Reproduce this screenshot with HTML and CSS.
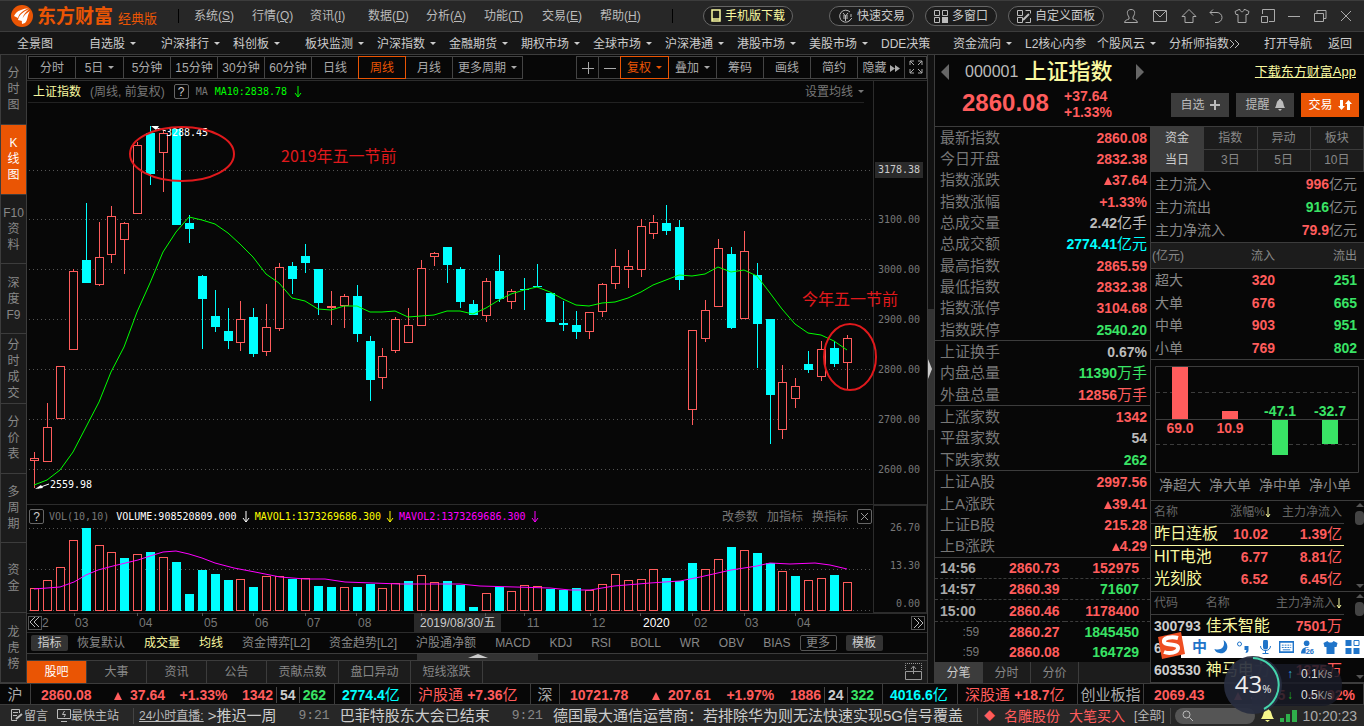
FILE: index.html
```html
<!DOCTYPE html>
<html lang="zh-CN">
<head>
  <meta charset="UTF-8">
  <meta name="viewport" content="width=device-width, initial-scale=1.0">
  <title>东方财富 经典版</title>
  <link rel="stylesheet" href="styles.css">
</head>
<body>

  <!-- Title bar -->
  <header class="titlebar">
    <div class="brand">
      <svg class="brand-mark" viewBox="0 0 22 22"><circle cx="11" cy="11" r="11" fill="#ea5504"/><path d="M3 11C6 5 12 4 18 3c-5 2-10 5-11 10zM7 15c1-5 5-8 11-11-4 4-6 6-7 12zM11 19c-1-6 3-10 8-13-3 4-2 9-5 12z" fill="#fff"/></svg>
      <span class="brand-name">东方财富</span>
      <span class="brand-edition">经典版</span>
    </div>
    <nav class="menu">
      <a href="#">系统(<u>S</u>)</a>
      <a href="#">行情(<u>Q</u>)</a>
      <a href="#">资讯(<u>I</u>)</a>
      <a href="#">数据(<u>D</u>)</a>
      <a href="#">分析(<u>A</u>)</a>
      <a href="#">功能(<u>T</u>)</a>
      <a href="#">交易(<u>E</u>)</a>
      <a href="#">帮助(<u>H</u>)</a>
    </nav>
    <button class="pill pill-phone"><svg width="10" height="14" viewBox="0 0 10 14"><path d="M1 1h8v11H1zM1 10h8M4 12h2" fill="none" stroke="#f9f9a0" stroke-width="1.5"/></svg>手机版下载</button>
    <div class="pills">
      <button class="pill"><svg width="15" height="15" viewBox="0 0 15 15" fill="none" stroke="#bbb"><path d="M12 3a6 6 0 1 0 1 7M5 4l2.500 3L10 4M7.500 7v5M5 7h5M5 9h5M13 5v3M11 12l3-3"/></svg>快速交易</button>
      <button class="pill"><svg width="14" height="13" viewBox="0 0 14 13" fill="none" stroke="#bbb"><path d="M.5.5h5v5h-5zM8.500.5h5v5h-5zM.5 7.500h5v5h-5z"/><path d="M8 7h6v6H8z" fill="#bbb" stroke="none"/></svg>多窗口</button>
      <button class="pill"><svg width="14" height="13" viewBox="0 0 14 13" fill="none" stroke="#bbb"><path d="M.5.5h5v5h-5zM8.500.5h5v3M.5 7.500h5v5h-5zM13.500 8v4.500h-5"/><path d="M6 10l6-6" stroke-width="2"/></svg>自定义面板</button>
    </div>
    <div class="window-tools">
      <button class="wide" aria-label="用户"><svg viewBox="0 0 16 16"><path d="M8 1.500c5 0 4 5 2 7.500v2c2 1 4 1 4.500 3.500h-13C2 12 4 12 6 11V9C4 6.500 3 1.500 8 1.500z"/></svg></button>
      <button class="wide" aria-label="邮件"><svg viewBox="0 0 16 16"><path d="M1.500 2.500h13v11h-13zM2 3l6 6 6-6"/></svg></button>
      <button class="wide" aria-label="主页"><svg viewBox="0 0 16 16"><path d="M1 8.500l7-7 7 7h-3v6H4v-6z"/></svg></button>
      <button aria-label="后退"><svg viewBox="0 0 16 16"><path d="M5 1.500l-3 3 3 3M2 4.500h7a5 5 0 0 1 0 10H7"/></svg></button>
      <button aria-label="皮肤"><svg viewBox="0 0 16 16"><path d="M5 1.500h1c0 3 4 3 4 0h1l4 2-1 3h-2v8H4v-8H2l-1-3z"/></svg></button>
      <button aria-label="布局"><svg viewBox="0 0 16 16"><path d="M2.500 6V1.500h12v12H9M1.500 8.500h6v6h-6z"/></svg></button>
      <button aria-label="最小化"><svg viewBox="0 0 16 16"><path d="M2 8.500h12"/></svg></button>
      <button aria-label="还原"><svg viewBox="0 0 16 16"><path d="M2.500 5.500h9v8h-9zM5 5V2.500h9v8h-2"/></svg></button>
      <button aria-label="关闭"><svg viewBox="0 0 16 16"><path d="M3 3l10 10M13 3L3 13"/></svg></button>
    </div>
  </header>

  <!-- Market navigation -->
  <nav class="markets">
    <a href="#">全景图</a>
    <a href="#">自选股<i class="caret"></i></a>
    <a href="#">沪深排行<i class="caret"></i></a>
    <a href="#">科创板<i class="caret"></i></a>
    <a href="#">板块监测<i class="caret"></i></a>
    <a href="#">沪深指数<i class="caret"></i></a>
    <a href="#">金融期货<i class="caret"></i></a>
    <a href="#">期权市场<i class="caret"></i></a>
    <a href="#">全球市场<i class="caret"></i></a>
    <a href="#">沪深港通<i class="caret"></i></a>
    <a href="#">港股市场<i class="caret"></i></a>
    <a href="#">美股市场<i class="caret"></i></a>
    <a href="#">DDE决策</a>
    <a href="#">资金流向<i class="caret"></i></a>
    <a href="#">L2核心内参</a>
    <a href="#">个股风云<i class="caret"></i></a>
    <a href="#">分析师指数<svg width="11" height="8" viewBox="0 0 11 8"><path d="M1 0l4 4-4 4M6 0l4 4-4 4" fill="none" stroke="#bbb"/></svg></a>
    <a href="#" class="nav-end">打开导航</a>
    <a href="#" class="nav-back">返回</a>
  </nav>

  <main class="workspace">
    <!-- Left tabs -->
    <aside class="side-tabs">
      <button>分<br>时<br>图</button>
      <button class="active">K<br>线<br>图</button>
      <button>F10<br>资<br>料</button>
      <button>深<br>度<br>F9</button>
      <button>分<br>时<br>成<br>交</button>
      <button>分<br>价<br>表</button>
      <button>多<br>周<br>期</button>
      <button>资<br>金</button>
      <button>龙<br>虎<br>榜</button>
    </aside>

    <section class="chart">
      <div class="toolbar">
        <div class="tool-group">
          <button>分时</button>
          <button class="drop">5日<i class="caret"></i></button>
          <button>5分钟</button>
          <button>15分钟</button>
          <button>30分钟</button>
          <button>60分钟</button>
          <button>日线</button>
          <button class="active">周线</button>
          <button>月线</button>
          <button class="long">更多周期<i class="caret"></i></button>
        </div>
        <div class="tool-group">
          <button class="short" aria-label="放大"><svg width="12" height="12" viewBox="0 0 12 12"><path d="M0 6.500h12M6.500 0v12" stroke="#aaa"/></svg></button>
          <button class="short" aria-label="缩小"><svg width="12" height="12" viewBox="0 0 12 12"><path d="M0 6.500h12" stroke="#aaa"/></svg></button>
          <button class="drop active">复权<i class="caret"></i></button>
          <button class="drop">叠加<i class="caret"></i></button>
          <button>筹码</button>
          <button>画线</button>
          <button>简约</button>
          <button>隐藏<svg class="fast" width="10" height="7" viewBox="0 0 10 7"><path d="M0 0l5 3.500L0 7zM5 0l5 3.500L5 7z" fill="#aaa"/></svg></button>
          <button class="short" aria-label="全屏"><svg width="14" height="14" viewBox="0 0 14 14"><path d="M1 5V1h4M1 1l4 4M9 1h4v4M13 1L9 5M1 9v4h4M1 13l4-4M13 9v4H9M13 13L9 9" fill="none" stroke="#aaa"/></svg></button>
        </div>
      </div>

      <!-- Price chart -->
      <div class="pane pane-price">
        <div class="pane-main">
          <div class="legend">
            <span class="name">上证指数</span>
            <span class="period">(周线, 前复权)</span>
            <button class="help">?</button>
            <span class="mono">MA</span>
            <span class="mono green">MA10:2838.78</span>
            <svg class="down green" width="8" height="12" viewBox="0 0 8 12"><path d="M4 0v11M1 7l3 4 3-4"/></svg>
            <button class="link legend-end">设置均线<i class="caret"></i></button>
          </div>
          <svg class="plot" id="pricePlot"></svg>
        </div>
        <div class="axis axis-price">
          <span><b class="axis-tag">3178.38</b></span>
          <span>3100.00</span>
          <span>3000.00</span>
          <span>2900.00</span>
          <span>2800.00</span>
          <span>2700.00</span>
          <span>2600.00</span>
        </div>
      </div>

      <!-- Volume chart -->
      <div class="pane pane-volume">
        <div class="pane-main">
          <div class="legend">
            <button class="help">?</button>
            <span class="mono">VOL(10,10)</span>
            <span class="mono white">VOLUME:908520809.000</span>
            <svg class="down white" width="8" height="12" viewBox="0 0 8 12"><path d="M4 0v11M1 7l3 4 3-4"/></svg>
            <span class="mono yellow">MAVOL1:1373269686.300</span>
            <svg class="down yellow" width="8" height="12" viewBox="0 0 8 12"><path d="M4 0v11M1 7l3 4 3-4"/></svg>
            <span class="mono magenta">MAVOL2:1373269686.300</span>
            <svg class="down magenta" width="8" height="12" viewBox="0 0 8 12"><path d="M4 0v11M1 7l3 4 3-4"/></svg>
            <button class="link legend-end">改参数</button>
            <button class="link">加指标</button>
            <button class="link">换指标</button>
            <button class="help" aria-label="关闭"><svg width="9" height="9" viewBox="0 0 9 9"><path d="M1 1l7 7M8 1L1 8" stroke="#999"/></svg></button>
          </div>
          <svg class="plot" id="volumePlot"></svg>
        </div>
        <div class="axis axis-volume">
          <span>26.70</span>
          <span>13.30</span>
          <span>0.00</span>
        </div>
      </div>

      <div class="dates">
        <span><button class="page-btn" aria-label="向前"><svg width="10" height="10" viewBox="0 0 10 10"><path d="M5 0L0 5l5 5M9 0L4 5l5 5" fill="none" stroke="#bbb"/></svg></button>2</span>
        <span>03</span>
        <span>04</span>
        <span>05</span>
        <span>06</span>
        <span>07</span>
        <span>08</span>
        <span><b class="date-tag">2019/08/30/五</b></span>
        <span>11</span>
        <span>12</span>
        <span class="year">2020</span>
        <span>02</span>
        <span>03</span>
        <span>04</span>
        <button class="page-btn" aria-label="向后"><svg width="10" height="10" viewBox="0 0 10 10"><path d="M1 0l5 5-5 5M5 0l5 5-5 5" fill="none" stroke="#bbb"/></svg></button>
      </div>

      <div class="indicators">
        <button class="solid">指标</button>
        <button>恢复默认</button>
        <button class="on">成交量</button>
        <button class="on">均线</button>
        <button>资金博弈[L2]</button>
        <button>资金趋势[L2]</button>
        <button>沪股通净额</button>
        <button>MACD</button>
        <button>KDJ</button>
        <button>RSI</button>
        <button>BOLL</button>
        <button>WR</button>
        <button>OBV</button>
        <button>BIAS</button>
        <button class="outline">更多</button>
        <button class="solid">模板</button>
      </div>
      <div class="h-scroll"><div class="h-thumb"><i></i></div></div>
      <div class="info-tabs">
        <button class="active">股吧</button>
        <button>大事</button>
        <button>资讯</button>
        <button>公告</button>
        <button class="long">贡献点数</button>
        <button class="long">盘口异动</button>
        <button class="long">短线涨跌</button>
        <button class="expand" aria-label="展开"><svg width="17" height="17" viewBox="0 0 17 17" fill="none" stroke="#999"><path d="M.5 8.500h16v8H.5zM8.500 11V4M6 6l2.500-3L11 6"/><path d="M.5 7V.5h16V7" stroke-dasharray="1 1"/></svg></button>
      </div>
    </section>

    <div class="splitter"><div class="split-thumb"><i></i></div></div>

    <!-- Right side -->
    <section class="detail">
      <div class="quote-head">
        <div class="quote-title">
          <button class="arrow-left" aria-label="上一个"></button>
          <span class="code">000001</span>
          <h1>上证指数</h1>
          <button class="arrow-right" aria-label="下一个"></button>
          <a href="#" class="app-link">下载东方财富App</a>
        </div>
        <div class="quote-price">
          <span class="last">2860.08</span>
          <span class="change">+37.64<br>+1.33%</span>
          <button>自选<svg width="10" height="10" viewBox="0 0 10 10"><path d="M0 5h10M5 0v10" stroke="#bbb" stroke-width="2"/></svg></button>
          <button>提醒<svg width="10" height="12" viewBox="0 0 10 12"><path d="M4 0h2v1c3 1 2 5 4 8H0c2-3 1-7 4-8zM3 10h4l-2 2z" fill="#bbb"/></svg></button>
          <button class="trade">交易<svg width="14" height="10" viewBox="0 0 14 10"><path d="M2 0h3v6h2l-3.500 4L0 6h2zM9 10h3V4h2l-3.500-4L7 4h2z" fill="#fff"/></svg></button>
        </div>
      </div>

      <div class="detail-cols">
        <div class="stats">
          <table class="quote-table">
            <tr><th>最新指数</th><td class="up">2860.08</td></tr>
            <tr><th>今日开盘</th><td class="up">2832.38</td></tr>
            <tr><th>指数涨跌</th><td class="up"><i class="tri"></i>37.64</td></tr>
            <tr><th>指数涨幅</th><td class="up">+1.33%</td></tr>
            <tr><th>总成交量</th><td>2.42<em>亿手</em></td></tr>
            <tr><th>总成交额</th><td class="cyan">2774.41<em>亿元</em></td></tr>
            <tr><th>最高指数</th><td class="up">2865.59</td></tr>
            <tr><th>最低指数</th><td class="up">2832.38</td></tr>
            <tr><th>指数涨停</th><td class="up">3104.68</td></tr>
            <tr><th>指数跌停</th><td class="dn">2540.20</td></tr>
            <tr class="rule"><th>上证换手</th><td>0.67%</td></tr>
            <tr><th>内盘总量</th><td class="dn">11390<em>万手</em></td></tr>
            <tr><th>外盘总量</th><td class="up">12856<em>万手</em></td></tr>
            <tr class="rule"><th>上涨家数</th><td class="up">1342</td></tr>
            <tr><th>平盘家数</th><td>54</td></tr>
            <tr><th>下跌家数</th><td class="dn">262</td></tr>
            <tr class="rule"><th>上证A股</th><td class="up">2997.56</td></tr>
            <tr><th>上A涨跌</th><td class="up"><i class="tri"></i>39.41</td></tr>
            <tr><th>上证B股</th><td class="up">215.28</td></tr>
            <tr><th>上B涨跌</th><td class="up"><i class="tri"></i>4.29</td></tr>
          </table>
          <table class="ticks">
            <tr><th>14:56</th><td class="up">2860.73</td><td class="up">152975</td></tr>
            <tr class="dash"><th>14:57</th><td class="up">2860.39</td><td class="dn">71607</td></tr>
            <tr class="dash"><th>15:00</th><td class="up">2860.46</td><td class="up">1178400</td></tr>
            <tr><th class="sec">:59</th><td class="up">2860.27</td><td class="dn">1845450</td></tr>
            <tr><th class="sec">:59</th><td class="up">2860.08</td><td class="dn">164729</td></tr>
          </table>
          <div class="stat-tabs">
            <button class="active">分笔</button>
            <button>分时</button>
            <button>分价</button>
          </div>
        </div>

        <div class="funds">
          <div class="fund-tabs">
            <button class="active">资金</button>
            <button>指数</button>
            <button>异动</button>
            <button>板块</button>
            <button class="active">当日</button>
            <button>3日</button>
            <button>5日</button>
            <button>10日</button>
          </div>
          <table class="main-flow">
            <tr><th>主力流入</th><td><b class="up">996</b>亿元</td></tr>
            <tr><th>主力流出</th><td><b class="dn">916</b>亿元</td></tr>
            <tr><th>主力净流入</th><td><b class="up">79.9</b>亿元</td></tr>
          </table>
          <table class="orders">
            <thead><tr><th>(亿元)</th><th>流入</th><th>流出</th></tr></thead>
            <tbody>
              <tr><th>超大</th><td class="up">320</td><td class="dn">251</td></tr>
              <tr><th>大单</th><td class="up">676</td><td class="dn">665</td></tr>
              <tr><th>中单</th><td class="up">903</td><td class="dn">951</td></tr>
              <tr><th>小单</th><td class="up">769</td><td class="dn">802</td></tr>
            </tbody>
          </table>
          <div class="net">
            <svg width="204" height="107" viewBox="0 0 204 107">
              <path d="M.5.5h203v106H.5zM1 53.500h202" class="frame"/>
              <path d="M1 26.500h202M1 78.500h202" class="frame dashed"/>
              <path d="M17 1h16v52H17zM67 45h16v8H67z" fill="#ff5c5c"/>
              <path d="M117 54h16v35h-16zM167 54h16v24h-16z" fill="#39e365"/>
              <text x="25" y="67" class="t-up">69.0</text>
              <text x="75" y="67" class="t-up">10.9</text>
              <text x="125" y="50" class="t-dn">-47.1</text>
              <text x="175" y="50" class="t-dn">-32.7</text>
            </svg>
            <div class="net-labels"><span>净超大</span><span>净大单</span><span>净中单</span><span>净小单</span></div>
          </div>
          <div class="list">
            <table>
              <thead><tr><th>名称</th><th>涨幅%<svg class="down pale" width="6" height="11" viewBox="0 0 6 11"><path d="M3 0v10M1 7l2 3 2-3"/></svg></th><th>主力净流入</th></tr></thead>
              <tbody>
                <tr class="picked"><td>昨日连板</td><td>10.02</td><td>1.39<em>亿</em></td></tr>
                <tr><td>HIT电池</td><td>6.77</td><td>8.81<em>亿</em></td></tr>
                <tr><td>光刻胶</td><td>6.52</td><td>6.45<em>亿</em></td></tr>
              </tbody>
            </table>
            <div class="v-scroll"><i class="v-up"></i><i class="v-thumb"></i><i class="v-down"></i></div>
          </div>
          <div class="list list-stocks">
            <table>
              <thead><tr><th>代码</th><th>名称</th><th>主力净流入<svg class="down pale" width="6" height="11" viewBox="0 0 6 11"><path d="M3 0v10M1 7l2 3 2-3"/></svg></th></tr></thead>
              <tbody>
                <tr><td>300793</td><td>佳禾智能</td><td>7501<em>万</em></td></tr>
                <tr><td>6</td><td></td><td></td></tr>
                <tr><td>603530</td><td>神马电力</td><td>1375<em>万</em></td></tr>
              </tbody>
            </table>
            <div class="v-scroll"><i class="v-up"></i><i class="v-thumb"></i><i class="v-down"></i></div>
          </div>
        </div>
      </div>
    </section>
  </main>

  <!-- Index ticker -->
  <div class="ticker">
    <div class="mkt">沪</div>
    <div class="idx up"><b>2860.08</b><b><i class="tri"></i>37.64</b><b>+1.33%</b><span class="counts"><b>1342</b><b class="flat">54</b><b class="dn">262</b></span></div>
    <div class="cyan"><b>2774.4</b>亿</div>
    <div class="up">沪股通 <b>+7.36</b>亿</div>
    <div class="mkt">深</div>
    <div class="idx up"><b>10721.78</b><b><i class="tri"></i>207.61</b><b>+1.97%</b><span class="counts"><b>1886</b><b class="flat">24</b><b class="dn">322</b></span></div>
    <div class="cyan"><b>4016.6</b>亿</div>
    <div class="up">深股通 <b>+18.7</b>亿</div>
    <div class="mkt">创业板指</div>
    <div class="idx up"><b>2069.43</b><b><i class="tri"></i>38.95</b><b>+1.92%</b></div>
  </div>

  <footer class="statusbar">
    <div class="status-links">
      <a href="#"><svg width="14" height="13" viewBox="0 0 14 13" fill="none" stroke="#bbb"><path d="M7 11.500H1.500V.5h8V4M3 3.500h5M3 6.500h4"/><path d="M6 10l6-5" stroke-width="2"/></svg>留言</a>
      <a href="#"><svg width="14" height="13" viewBox="0 0 14 13" fill="none" stroke="#bbb"><path d="M.5.5h13v9H.5zM4 12.500h6M7.500 2L5.500 5.500h3L7 8"/></svg>最快主站</a>
    </div>
    <div class="news">
      <a href="#" class="live">24小时直播:</a>
      <span class="headline">&gt;推迟一周</span>
      <time>9:21</time>
      <span class="headline">巴菲特股东大会已结束</span>
      <time>9:21</time>
      <span class="headline">德国最大通信运营商：若排除华为则无法快速实现5G信号覆盖</span>
    </div>
    <div class="alert"><span class="up gem">◆</span><span class="up">名雕股份</span><span class="up">大笔买入</span><a href="#">[全部]</a></div>
    <div class="tray">
      <label class="search"><svg width="11" height="11" viewBox="0 0 11 11"><path d="M7.500 7.500L11 11M8 4.500a3.500 3.500 0 1 1-7 0 3.500 3.500 0 0 1 7 0z" fill="none" stroke="#bbb"/></svg><input type="text" aria-label="搜索"></label>
      <svg width="13" height="13" viewBox="0 0 13 13"><path d="M5 0h3v1c3 1 2 5 5 9H0c3-4 2-8 5-9zM4 11h5l-2.500 2z" fill="#f6f68c"/></svg>
      <svg width="17" height="12" viewBox="0 0 17 12"><path d="M0 8h4v4H0zM6 4h4v8H6zM12 0h5v12h-5z" fill="#2fae4b"/></svg>
      <time>10:20:23</time>
    </div>
  </footer>

  <!-- Floating input method bar -->
  <div class="ime">
    <svg class="ime-logo" viewBox="0 0 28 28"><path d="M1 5L24 0l4 22-23 5z" fill="#ee4e22"/><path d="M21 6C14 4 6 6 7 10s14 1 14 6-9 6-14 4" fill="none" stroke="#fff" stroke-width="4"/></svg>
    <span>中</span>
    <svg viewBox="0 0 14 14"><path d="M9 0c8 6 2 15-4 13-3 0-5-3-5-4 7 2 11-2 9-9z" fill="#1f74c9"/></svg>
    <svg viewBox="0 0 14 14"><circle cx="3" cy="4" r="2" fill="none" stroke="#1f74c9"/><path d="M8 6h4v4c0 2-1 3-3 3l1-3H8z" fill="#1f74c9"/></svg>
    <svg viewBox="0 0 14 14"><path d="M7 2v5" stroke="#1f74c9" stroke-width="5" stroke-linecap="round"/><path d="M2 6c0 6 10 6 10 0M7 10v4M4 13.500h6" fill="none" stroke="#1f74c9"/></svg>
    <svg viewBox="0 0 16 14"><path d="M.5 1.500h15v11H.5z" fill="none" stroke="#1f74c9" stroke-width="2"/><path d="M3 5h10M3 7.500h10" stroke="#1f74c9" stroke-dasharray="2 1"/><path d="M4 10h8" stroke="#1f74c9"/></svg>
    <svg viewBox="0 0 16 14"><circle cx="6" cy="3" r="3" fill="#1f74c9"/><path d="M0 14c0-9 12-9 12 0z" fill="#1f74c9"/><path d="M5 8h11v6H5z" fill="#fff"/><text x="5" y="14" class="ime-num">26</text></svg>
    <svg viewBox="0 0 14 14"><path d="M4 1c1 2 5 2 6 0l4 2-1 4h-2v7H3V7H1L0 3z" fill="#1f74c9"/></svg>
    <svg viewBox="0 0 14 14"><path d="M0 0h6v6H0zM0 8h6v6H0zM8 8h6v6H8z" fill="#1f74c9"/><path d="M8.500.5h5v5h-5z" fill="none" stroke="#1f74c9"/></svg>
  </div>

  <!-- Floating network meter -->
  <div class="meter">
    <div class="meter-speed">
      <div><i class="blue">↑</i>0.1<small>K/s</small></div>
      <div><i class="grass">↓</i>0.5<small>K/s</small></div>
    </div>
    <div class="meter-ball">
      <svg viewBox="0 0 58 58"><path d="M29 2a27 27 0 0 1 11 51" fill="none" stroke="#45d5ad" stroke-width="2"/></svg>
      <span>43<small>%</small></span>
    </div>
  </div>

  <script src="chart.js"></script>
</body>
</html>
```

FILE: styles.css
```css
* {
  box-sizing: border-box;
}
body {
  margin: 0;
  min-height: 100vh;
  display: flex;
  flex-direction: column;
  position: relative;
  background-color: #070707;
  color: #bbb;
  font-family: "Liberation Sans", "Noto Sans CJK SC", sans-serif;
  font-size: 12px;
  line-height: 16px;
  overflow: hidden;
}
button {
  margin: 0;
  padding: 0;
  border: 0;
  background: none;
  color: inherit;
  font: inherit;
  white-space: nowrap;
  cursor: pointer;
}
a {
  color: inherit;
  text-decoration: none;
}
em, i {
  font-style: normal;
}
em {
  font-weight: normal;
}
table {
  width: 100%;
  border-collapse: collapse;
}
th, td {
  padding: 0;
  font-weight: normal;
  text-align: left;
}
.up { color: #ff5c5c; }
.dn { color: #39e365; }
.cyan { color: #00ffff; }
.flat { color: #ccc; }
.caret {
  display: inline-block;
  margin-left: 5px;
  border: 3px solid transparent;
  border-top-color: currentColor;
  border-bottom: 0;
  vertical-align: 3px;
}
.tri {
  display: inline-block;
  border: 4px solid transparent;
  border-bottom: 8px solid currentColor;
  border-top: 0;
}

/* Title bar */
.titlebar {
  height: 32px;
  display: flex;
  align-items: center;
  background-color: #272727;
  border-top: 1px solid #3c3c3c;
  border-bottom: 1px solid #3c3c3c;
}
.brand {
  width: 179px;
  height: 14px;
  display: flex;
  align-items: center;
  padding-left: 11px;
  border-right: 1px solid #000;
  color: #ea5504;
}
.brand-mark {
  width: 22px;
  height: 22px;
}
.brand-name {
  margin-left: 4px;
  padding-top: 2px;
  font-size: 19px;
  font-weight: bold;
  white-space: nowrap;
}
.brand-edition {
  margin-left: 5px;
  padding-top: 6px;
  font-size: 13px;
  white-space: nowrap;
}
.menu {
  display: flex;
  width: 494px;
  padding-left: 15px;
  border-right: 1px solid #000;
  height: 14px;
  align-items: center;
}
.menu a {
  width: 58px;
}
.pill {
  height: 20px;
  display: flex;
  align-items: center;
  gap: 4px;
  padding: 0 7px;
  border: 1px solid #666;
  border-radius: 10px;
  background-color: #1c1c1c;
  color: #ccc;
}
.pill-phone {
  margin-left: 30px;
  color: #f9f9a0;
}
.pills {
  display: flex;
  gap: 11px;
  margin: 0 12px 0 auto;
}
.pills .pill {
  padding: 0 8px;
}
.window-tools {
  display: flex;
  margin-right: 5px;
}
.window-tools button {
  width: 26px;
  height: 16px;
}
.window-tools .wide {
  width: 29px;
}
.window-tools svg {
  width: 16px;
  height: 16px;
  fill: none;
  stroke: #aaa;
}

/* Market navigation */
.markets {
  height: 23px;
  display: flex;
  align-items: center;
  padding: 2px 12px 0 17px;
  background-color: #151515;
  border-bottom: 1px solid #3c3c3c;
  color: #ccc;
}
.markets a {
  flex: 0 0 72px;
  white-space: nowrap;
}
.markets .nav-end {
  flex: none;
  margin-left: auto;
}
.markets .nav-back {
  flex: none;
  margin-left: 16px;
}

.workspace {
  flex: 1;
  display: flex;
  min-height: 0;
}

/* Left tabs */
.side-tabs {
  width: 27px;
  display: flex;
  flex-direction: column;
  background-color: #1c1c1c;
  border-left: 1px solid #3c3c3c;
  border-right: 1px solid #3c3c3c;
  color: #888;
}
.side-tabs button {
  flex: 1;
  border-bottom: 1px solid #3c3c3c;
}
.side-tabs .active {
  background-color: #ea5504;
  color: #fff;
}

/* Chart column */
.chart {
  flex: 1;
  min-width: 0;
  display: flex;
  flex-direction: column;
}
.toolbar {
  height: 25px;
  display: flex;
  justify-content: space-between;
  padding: 1px 0 0 1px;
}
.tool-group {
  display: flex;
  height: 23px;
  padding-left: 1px;
  color: #aaa;
}
.tool-group button {
  width: 48px;
  margin-left: -1px;
  border: 1px solid #444;
}
.tool-group .drop {
  width: 49px;
}
.tool-group .long {
  width: 71px;
}
.tool-group .short {
  width: 23px;
}
.tool-group svg {
  vertical-align: -2px;
}
.tool-group .fast {
  margin-left: 3px;
  vertical-align: 0;
}
.tool-group .active {
  position: relative;
  border-color: #ea5504;
  color: #ea5504;
}
.pane {
  display: flex;
  border-top: 1px solid #2c2c2c;
}
.pane-price {
  flex: 1;
  min-height: 0;
}
.pane-volume {
  height: 109px;
}
.pane-main {
  flex: 1;
  min-width: 0;
  display: flex;
  flex-direction: column;
  position: relative;
  z-index: 1;
  padding-left: 1px;
}
.legend {
  height: 22px;
  display: flex;
  align-items: center;
  gap: 7px;
  margin-right: 9px;
  padding-left: 5px;
  border-bottom: 1px solid #222;
  color: #777;
  white-space: nowrap;
}
.pane-volume .legend {
  height: 23px;
  gap: 5px;
  margin-right: 1px;
  padding-left: 1px;
  border-bottom: 0;
}
.name { color: #f9f9a0; }
.green { color: #00ff00; }
.white { color: #fff; }
.yellow { color: #ffff00; }
.magenta { color: #ff00ff; }
.pale { color: #f9f9a0; }
.period {
  margin: 0 2px;
}
.mono, .axis {
  font-family: "DejaVu Sans Mono", monospace;
  font-size: 10px;
}
.mono.white {
  margin-left: 2px;
}
.down {
  fill: none;
  stroke: currentColor;
}
.help {
  width: 15px;
  height: 15px;
  border: 1px solid #666;
  border-radius: 2px;
  color: #ccc;
  line-height: 12px;
}
.pane-volume .link {
  margin-right: 4px;
}
.legend .legend-end {
  margin-left: auto;
}
.plot {
  flex: 1;
  width: 100%;
  min-height: 0;
  display: block;
  overflow: visible;
}
.plot text {
  font-size: 10px;
  font-family: "DejaVu Sans Mono", monospace;
  fill: #fff;
}
.plot .note {
  font-family: "Noto Sans CJK SC", sans-serif;
  font-size: 16px;
  fill: #e0191c;
}
.crisp {
  shape-rendering: crispEdges;
}
.axis {
  width: 54px;
  display: flex;
  flex-direction: column;
  border-left: 1px solid #2c2c2c;
  color: #777;
}
.axis-price {
  padding: 64px 0 9px 4px;
}
.axis-price span {
  flex: 1;
  display: flex;
  align-items: center;
}
.axis-tag {
  margin-left: -3px;
  padding: 0 3px;
  background-color: #2a2a2a;
  color: #ccc;
  font-weight: normal;
}
.axis-volume {
  align-items: flex-end;
  gap: 22px;
  padding: 14px 6px 0 0;
  border: 1px solid #2c2c2c;
}
.dates {
  height: 20px;
  display: grid;
  grid-template-columns: 47fr 64fr 65fr 51fr 52fr 51fr 56fr 113fr 65fr 51fr 51fr 51fr 52fr 114fr 14px;
  align-items: center;
  padding: 0 2px 0 1px;
  border-top: 1px solid #2c2c2c;
  border-bottom: 1px solid #2c2c2c;
  color: #777;
}
.page-btn {
  width: 14px;
  height: 14px;
  border: 1px solid #555;
  line-height: 10px;
}
.date-tag {
  display: inline-block;
  padding: 1px 6px;
  background-color: #2a2a2a;
  color: #ccc;
  font-weight: normal;
}
.year {
  color: #fff;
}
.indicators {
  height: 21px;
  display: flex;
  align-items: center;
  gap: 19px;
  padding-left: 4px;
  border-bottom: 1px solid #3c3c3c;
  color: #888;
}
.indicators .on {
  color: #f9f9a0;
}
.indicators .solid, .indicators .outline {
  width: 37px;
  height: 16px;
  margin: 0 -10px;
  border-radius: 2px;
  line-height: 14px;
}
.indicators .solid {
  background-color: #333;
  color: #ccc;
}
.indicators .solid:first-child {
  margin-left: 0;
}
.indicators .outline {
  border: 1px solid #555;
}
.indicators .solid:last-child {
  margin-left: 0;
}
.h-scroll {
  height: 6px;
  padding-left: 390px;
  background-color: #111;
}
.h-thumb {
  width: 121px;
  height: 6px;
  background-color: #333;
}
.h-thumb i {
  display: block;
  width: 20px;
  margin: 0 auto;
  border: 10px solid transparent;
  border-bottom: 4px solid #ccc;
  border-top: 0;
}
.info-tabs {
  height: 23px;
  display: flex;
  background-color: #1c1c1c;
  border-top: 1px solid #3c3c3c;
  color: #888;
}
.info-tabs button {
  width: 60px;
  border-right: 1px solid #3c3c3c;
}
.info-tabs .long {
  width: 72px;
}
.info-tabs .active {
  background-color: #ea5504;
  color: #fff;
}
.info-tabs .expand {
  width: 17px;
  height: 17px;
  margin: 2px 5px 0 auto;
  border: 0;
  line-height: 0;
}
.splitter {
  width: 8px;
  display: flex;
  align-items: center;
  border-left: 1px solid #3c3c3c;
  border-right: 1px solid #3c3c3c;
  background-color: #111;
}
.split-thumb {
  width: 6px;
  height: 121px;
  display: flex;
  align-items: center;
  background-color: #333;
}
.split-thumb i {
  border: 10px solid transparent;
  border-left: 4px solid #ccc;
  border-right: 0;
}

/* Quote header */
.detail {
  width: 429px;
  display: flex;
  flex-direction: column;
}
.quote-head {
  height: 72px;
  padding: 4px 5px 0 6px;
  border-bottom: 1px solid #3c3c3c;
}
.quote-title {
  height: 26px;
  display: flex;
  align-items: center;
}
.arrow-left, .arrow-right {
  border: 8px solid transparent;
}
.arrow-left {
  border-right-color: #666;
  border-left: 0;
}
.arrow-right {
  border-left-color: #666;
  border-right: 0;
  margin-left: 24px;
}
.code {
  margin-left: 16px;
  font-size: 16px;
}
.quote-title h1 {
  margin: 0 0 0 6px;
  color: #f9f9a0;
  font-size: 22px;
  font-weight: 500;
  line-height: 26px;
}
.app-link {
  margin-left: auto;
  margin-right: 3px;
  color: #f9f9a0;
  font-size: 13px;
  text-decoration: underline;
}
.quote-price {
  height: 38px;
  display: flex;
  align-items: center;
}
.last {
  width: 101px;
  padding: 0 0 2px 21px;
  color: #ff5c5c;
  font-size: 24px;
  font-weight: bold;
  white-space: nowrap;
}
.change {
  margin: 0 auto 0 22px;
  color: #ff5c5c;
  font-size: 14px;
  font-weight: bold;
}
.quote-price button {
  width: 58px;
  height: 24px;
  display: flex;
  justify-content: center;
  align-items: center;
  gap: 5px;
  margin: 2px 0 0 7px;
  background-color: #3c3c3c;
}
.quote-price .trade {
  background-color: #ea5504;
  color: #fff;
}

.detail-cols {
  flex: 1;
  min-height: 0;
  display: flex;
}
.stats {
  width: 216px;
  display: flex;
  flex-direction: column;
  border-right: 1px solid #3c3c3c;
}
.quote-table {
  height: 430px;
  font-size: 15px;
  line-height: 18px;
}
.quote-table th {
  padding-left: 5px;
  color: #777;
}
.quote-table td {
  padding-right: 3px;
  text-align: right;
  font-size: 14px;
  font-weight: bold;
}
.quote-table em {
  font-size: 15px;
}
.rule {
  border-top: 1px solid #3c3c3c;
}
.ticks {
  height: 105px;
  border-top: 1px solid #3c3c3c;
  font-size: 14px;
  line-height: 18px;
}
.ticks th {
  width: 42px;
  padding-left: 5px;
  color: #aaa;
  font-weight: bold;
}
.ticks .sec {
  color: #777;
  font-size: 12px;
  font-weight: normal;
  text-align: right;
}
.ticks td {
  width: 81px;
  text-align: right;
  font-weight: bold;
}
.ticks td:nth-child(2) {
  padding-right: 5px;
}
.ticks td:last-child {
  padding-right: 11px;
}
.dash {
  border-top: 1px dashed #3c3c3c;
  border-bottom: 1px dashed #3c3c3c;
}
.stat-tabs {
  flex: 1;
  display: flex;
  background-color: #1c1c1c;
  color: #888;
}
.stat-tabs button {
  width: 48px;
  border-right: 1px solid #3c3c3c;
}
.stat-tabs .active {
  background-color: #3c3c3c;
  color: #ccc;
}

/* Fund flow column */
.funds {
  flex: 1;
  display: flex;
  flex-direction: column;
}
.fund-tabs {
  height: 45px;
  display: grid;
  grid-template-columns: repeat(4, 1fr);
  background-color: #1c1c1c;
  color: #888;
}
.fund-tabs button {
  border-right: 1px solid #3c3c3c;
  border-bottom: 1px solid #3c3c3c;
}
.fund-tabs .active {
  background-color: #3c3c3c;
  color: #ccc;
}
.main-flow {
  height: 70px;
  color: #888;
  font-size: 14px;
  line-height: 18px;
}
.main-flow th {
  padding-left: 4px;
}
.main-flow td {
  padding-right: 7px;
  text-align: right;
}
.orders {
  height: 118px;
  border-bottom: 1px solid #3c3c3c;
  color: #888;
  font-size: 14px;
  line-height: 18px;
}
.orders thead tr {
  height: 26px;
  background-color: #1c1c1c;
  border-top: 1px solid #3c3c3c;
  border-bottom: 1px solid #3c3c3c;
  font-size: 12px;
}
.orders th:first-child {
  padding-left: 4px;
}
.orders thead th:first-child {
  padding-left: 1px;
}
.orders th + th, .orders td {
  width: 81px;
  padding-right: 7px;
  text-align: right;
}
.orders th + th:last-child, .orders td:last-child {
  width: 82px;
}
.orders td {
  font-weight: bold;
}
.net {
  height: 141px;
  padding: 6px 4px 0;
  border-bottom: 1px solid #3c3c3c;
}
.net svg {
  display: block;
}
.frame {
  fill: none;
  stroke: #3c3c3c;
}
.dashed {
  stroke-dasharray: 4 3;
}
.t-up, .t-dn {
  fill: #ff5c5c;
  font-size: 14px;
  font-weight: bold;
  text-anchor: middle;
}
.t-dn {
  fill: #39e365;
}
.net-labels {
  display: grid;
  grid-template-columns: repeat(4, 50px);
  padding: 3px 0 0 4px;
  color: #888;
  font-size: 14px;
  line-height: 18px;
}
.list {
  height: 91px;
  display: flex;
  align-items: flex-start;
  border-bottom: 1px solid #3c3c3c;
}
.list table {
  width: 193px;
  height: 89px;
}
.list thead tr {
  height: 22px;
  border-bottom: 1px solid #3c3c3c;
  color: #666;
}
.list td {
  color: #ff5c5c;
  font-size: 14px;
  font-weight: bold;
  line-height: 20px;
  white-space: nowrap;
}
.list em {
  font-size: 15px;
}
.list th:first-child, .list td:first-child {
  padding-left: 3px;
}
.list td:first-child {
  color: #f9f9a0;
  font-size: 16px;
  font-weight: normal;
}
.list th + th, .list td + td {
  text-align: right;
}
.list th:last-child, .list td:last-child {
  width: 73px;
  padding-right: 2px;
}
.list td:nth-child(2) {
  padding-right: 3px;
}
.list th .down {
  vertical-align: -2px;
}
.picked {
  border-bottom: 1px solid #f9f9a0;
}
.list-stocks td:first-child {
  width: 55px;
  color: #ccc;
  font-size: 14px;
  font-weight: bold;
}
.list-stocks td:nth-child(2) {
  color: #f9f9a0;
  font-size: 16px;
  font-weight: normal;
}
.list-stocks th:nth-child(2), .list-stocks td:nth-child(2) {
  text-align: left;
}
.v-scroll {
  width: 9px;
  height: 89px;
  display: flex;
  flex-direction: column;
  align-items: center;
  margin-left: auto;
  padding: 2px 0;
}
.v-up, .v-down {
  border: 4px solid transparent;
}
.v-up {
  border-top: 0;
  border-bottom-color: #555;
}
.v-down {
  margin-top: auto;
  border-bottom: 0;
  border-top-color: #555;
}
.v-thumb {
  width: 9px;
  height: 14px;
  margin-top: 4px;
  border-radius: 4px;
  background-color: #444;
}

/* Index ticker */
.ticker {
  height: 22px;
  display: grid;
  grid-template-columns: 31px 304px 76px 120px 29px 323px 75px 120px 66px 1fr;
  border-top: 1px solid #3c3c3c;
  border-bottom: 1px solid #3c3c3c;
  font-size: 15px;
  line-height: 22px;
  white-space: nowrap;
}
.ticker > div {
  height: 20px;
  padding: 0 7px;
  border-right: 1px solid #3c3c3c;
}
.ticker b {
  font-size: 14px;
}
.ticker .mkt {
  padding: 0;
  color: #aaa;
  text-align: center;
}
.ticker .idx {
  display: flex;
  justify-content: space-between;
  padding: 0 8px 0 10px;
}
.idx > b:first-child {
  margin-right: 8px;
}
.idx .tri {
  margin-right: 8px;
}
.counts b + b {
  margin-left: 3px;
  padding-left: 3px;
  border-left: 1px solid #444;
}

/* Status bar */
.statusbar {
  height: 21px;
  display: flex;
  align-items: center;
  background-color: #272727;
  white-space: nowrap;
}
.status-links {
  width: 134px;
  display: flex;
  gap: 9px;
  padding-left: 10px;
  border-right: 1px solid #444;
}
.status-links svg {
  vertical-align: -2px;
}
.news {
  flex: 1;
  min-width: 0;
  display: flex;
  align-items: center;
  padding-left: 5px;
  overflow: hidden;
}
.live {
  text-decoration: underline;
}
.headline {
  margin-left: 4px;
  color: #ccc;
  font-size: 15px;
  line-height: 20px;
}
.news time {
  margin-left: 22px;
  color: #888;
  font-family: "Liberation Mono", monospace;
  font-size: 13px;
}
.news time + .headline {
  margin-left: 10px;
}
.alert {
  width: 194px;
  display: flex;
  align-items: center;
  gap: 9px;
  padding-left: 6px;
  border-left: 1px solid #444;
  border-right: 1px solid #444;
  font-size: 14px;
}
.gem {
  font-size: 11px;
}
.alert a {
  font-size: 12px;
}
.tray {
  width: 193px;
  display: flex;
  align-items: center;
  justify-content: space-between;
  padding: 0 7px 0 4px;
}
.tray time {
  color: #aaa;
  font-size: 14px;
}
.search {
  width: 80px;
  height: 16px;
  display: flex;
  align-items: center;
  padding-left: 7px;
  border-radius: 8px;
  background-color: #555;
}
.search input {
  width: 50px;
  border: 0;
  background: none;
  color: #ccc;
}

/* Floating widgets */
.ime {
  position: absolute;
  right: 0;
  bottom: 68px;
  width: 183px;
  height: 22px;
  display: flex;
  align-items: center;
  justify-content: space-between;
  padding: 0 4px 0 11px;
  background-color: #fff;
  color: #1f74c9;
  font-size: 15px;
  font-weight: bold;
}
.ime svg {
  width: 15px;
  height: 14px;
}
.ime .ime-logo {
  position: absolute;
  left: -24px;
  top: -4px;
  width: 28px;
  height: 28px;
}
.ime-num {
  font-size: 8px;
  fill: #1f74c9;
}
.meter {
  position: absolute;
  right: 22px;
  bottom: 12px;
  width: 118px;
  height: 58px;
}
.meter-speed {
  position: absolute;
  right: 0;
  top: 8px;
  width: 90px;
  padding-left: 35px;
  border-radius: 0 20px 20px 0;
  background-color: rgba(24, 26, 38, 0.85);
  color: #ddd;
  font-size: 12px;
  line-height: 20px;
}
.meter-speed i {
  display: inline-block;
  width: 14px;
}
.meter-speed small {
  color: #999;
  font-size: 10px;
}
.blue { color: #2fa8e8; }
.grass { color: #1fb51f; }
.meter-ball {
  position: relative;
  width: 58px;
  height: 58px;
  border-radius: 50%;
  background-color: rgba(40, 46, 64, 0.92);
  color: #eee;
  text-align: center;
  font-family: "Open Sans", sans-serif;
  font-size: 24px;
  line-height: 56px;
}
.meter-ball svg {
  position: absolute;
  left: 0;
  top: 0;
}
.meter-ball small {
  font-size: 11px;
}
```

FILE: chart.js
```js
// one row per week: colour, high, body top, body bottom, low
const candles = [
  ['r',452,458,461,488],['r',403,427,462,462],['r',366,366,419,419],['r',269,271,350,350],
  ['c',203,260,283,283],['r',222,257,285,286],['r',206,216,255,263],['r',222,223,240,274],
  ['r',142,145,214,214],['c',126,133,174,185],['r',130,133,153,192],['c',129,129,225,225],
  ['c',215,223,229,243],['c',275,276,299,349],['c',290,316,327,332],['c',308,331,341,349],
  ['r',301,319,343,351],['c',308,317,354,357],['r',304,327,352,356],['r',263,267,329,331],
  ['c',262,266,279,294],['c',244,256,263,273],['c',269,269,303,315],['r',291,306,308,325],
  ['r',294,296,306,328],['c',285,296,334,342],['c',336,341,380,401],['r',348,356,378,389],
  ['r',317,319,351,353],['r',308,325,343,343],['r',260,268,326,326],['r',252,253,257,266],
  ['c',247,247,265,283],['c',267,269,302,308],['c',300,304,315,315],['r',278,281,316,322],
  ['c',255,271,299,302],['r',289,291,302,309],['c',278,289,290,310],['c',264,286,287,287],
  ['c',293,293,322,322],['c',301,323,325,331],['c',311,325,332,339],['r',312,312,332,339],
  ['r',283,284,312,317],['r',249,266,284,289],['r',250,266,270,288],['r',219,226,270,277],
  ['r',215,222,234,239],['c',205,223,231,235],['c',220,227,280,290],['r',330,330,410,425],
  ['r',300,310,339,342],['r',239,248,307,307],['c',247,254,328,329],['r',231,251,319,319],
  ['c',263,275,324,368],['c',319,319,395,444],['r',365,382,430,439],['r',378,386,399,408],
  ['c',351,364,370,373],['r',341,349,377,381],['c',341,348,364,367],['r',335,338,363,389]
];
const average = [485,480,470,452,427,402,372,347,312,283,252,232,217,220,224,233,244,257,274,283,298,
  301,309,310,306,306,312,312,311,317,316,315,311,311,314,308,300,294,290,287,292,299,305,306,303,302,
  298,292,285,280,275,276,274,267,272,270,276,293,309,324,333,335,341,350];

const volumes = [588,580,567,540,528,545,552,558,554,552,557,562,594,570,574,580,579,587,576,576,579,
  578,586,587,587,587,584,588,583,581,575,582,581,585,607,593,587,591,585,586,589,590,588,590,584,574,
  580,579,569,578,581,563,569,559,547,550,553,563,571,576,580,578,575,582];
const volumeColors = 'rrrrcrrcrcrcccccrcrrcrccrccrrcrrcccrcrrrcccrrrrrrcccrrcrccrcrrcr';
const volumeAverage = [[34,589],[60,587],[74,582],[86,575],[98,570],[113,566],[138,560],[150,556],
  [163,552],[176,551],[189,554],[202,558],[215,563],[234,568],[255,572],[280,577],[305,579],[325,579],
  [345,582],[400,584],[460,584],[480,586],[550,588],[570,590],[590,590],[614,586],[650,583],[680,581],
  [700,577],[731,570],[757,566],[770,563],[790,564],[815,563],[830,565],[847,569]];
const monthTicks = [74,137,202,253,305,356,421,485,524,590,640,692,744,795];

const colors = { r: '#ff5c5c', c: '#00ffff' };
const centre = i => Math.round(34 + i * 12.905);

// maps chart units to the size that the plot has now
function scale(svg, top, span) {
  const w = svg.clientWidth, h = svg.clientHeight;
  svg.setAttribute('viewBox', `0 0 ${w} ${h}`);
  return {
    x: v => Math.round((v - 28) * w / 845),
    y: v => Math.round((v - top) * h / span),
    w: w
  };
}

function gridLine(s, y) {
  return `<path class="crisp" d="M1 ${s.y(y) + 0.5}H${s.w}" stroke="#555" stroke-dasharray="1 3"/>`;
}

function box(color, x, top, bottom) {
  const h = Math.max(bottom - top, 1);
  if (color === 'c' || h < 3) {
    return `<rect class="crisp" x="${x - 4}" y="${top}" width="9" height="${h}" fill="${colors[color]}"/>`;
  }
  return `<rect class="crisp" x="${x - 3.5}" y="${top + 0.5}" width="8" height="${h - 1}" fill="#070707" stroke="${colors[color]}"/>`;
}

function drawPrice() {
  const svg = document.getElementById('pricePlot');
  const s = scale(svg, 103, 401);
  let out = '';
  [170, 219, 269, 319, 369, 419, 469].forEach(y => out += gridLine(s, y));
  candles.forEach((c, i) => {
    const x = s.x(centre(i));
    out += `<path class="crisp" d="M${x + 0.5} ${s.y(c[1])}V${s.y(c[4])}" stroke="${colors[c[0]]}"/>`;
    out += box(c[0], x, s.y(c[2]), s.y(c[3]));
  });
  const line = average.map((y, i) => s.x(centre(i)) + ',' + s.y(y)).join(' ');
  out += `<polyline points="${line}" fill="none" stroke="#00ff00"/>`;
  out += `<path d="M${s.x(166)} ${s.y(131)}L${s.x(154)} ${s.y(127)}M${s.x(49)} ${s.y(484)}L${s.x(38)} ${s.y(488)}" stroke="#fff"/>`;
  out += `<path d="M${s.x(151)} ${s.y(126)}h8l-3 4zM${s.x(35)} ${s.y(489)}l6 -4l2 3z" fill="#fff"/>`;
  out += `<text x="${s.x(166)}" y="${s.y(136)}">3288.45</text>`;
  out += `<text x="${s.x(50)}" y="${s.y(488)}">2559.98</text>`;
  out += `<g fill="none" stroke="#e0191c" stroke-width="2"><ellipse cx="${s.x(182)}" cy="${s.y(154)}" rx="52" ry="27"/>`;
  out += `<ellipse cx="${s.x(850)}" cy="${s.y(357)}" rx="26" ry="33"/></g>`;
  out += `<text class="note" x="${s.x(281)}" y="${s.y(162)}">2019年五一节前</text>`;
  out += `<text class="note" x="${s.x(802)}" y="${s.y(305)}">今年五一节前</text>`;
  svg.innerHTML = out;
}

function drawVolume() {
  const svg = document.getElementById('volumePlot');
  const s = scale(svg, 528, 85);
  let out = '';
  [528, 569, 610].forEach(y => out += gridLine(s, y));
  volumes.forEach((v, i) => out += box(volumeColors[i], s.x(centre(i)), s.y(v), s.y(611)));
  const line = volumeAverage.map(p => s.x(p[0]) + ',' + s.y(p[1])).join(' ');
  out += `<polyline points="${line}" fill="none" stroke="#ff00ff"/>`;
  monthTicks.forEach(x => out += `<path class="crisp" d="M${s.x(x) + 0.5} ${s.y(613)}v3" stroke="#555"/>`);
  svg.innerHTML = out;
}

function draw() {
  drawPrice();
  drawVolume();
}

draw();
window.addEventListener('resize', draw);
```
